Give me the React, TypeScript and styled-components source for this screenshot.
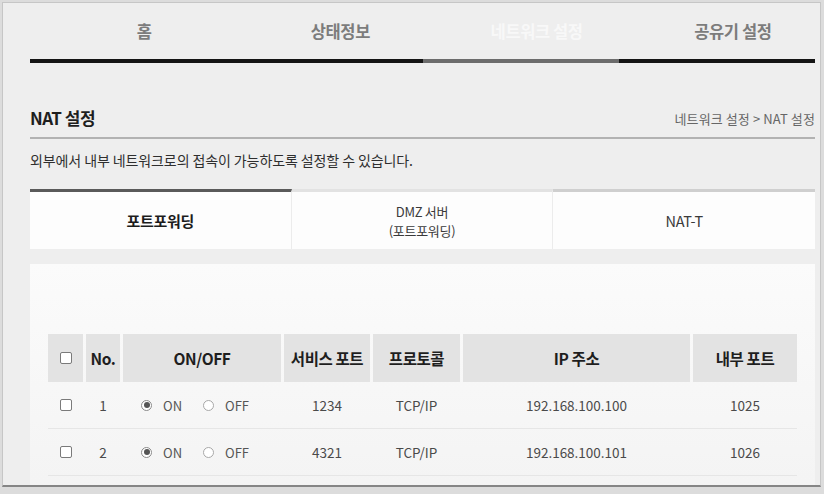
import React from "react";
import styled, { createGlobalStyle } from "styled-components";

const Global = createGlobalStyle`
  html, body { margin: 0; padding: 0; }
  body {
    background: #dcdcdc;
    font-family: "Noto Sans CJK KR", "Noto Sans", sans-serif;
    width: 824px;
    height: 494px;
    overflow: hidden;
  }
`;

const Frame = styled.div`
  box-sizing: border-box;
  margin: 2px 3px 0 2px;
  height: 485px;
  border: 1px solid #c6c6c6;
  border-bottom: 2px solid #858585;
  background: #eeeeee;
  padding: 0 5px 0 27px;
  overflow: hidden;
`;

const Nav = styled.nav`
  display: grid;
  grid-template-columns: repeat(4, 1fr);
`;

const NavItem = styled.div<{ $active?: boolean }>`
  height: 56px;
  display: flex;
  align-items: center;
  justify-content: center;
  padding-left: 32px;
  font-size: 16.5px;
  font-weight: 700;
  letter-spacing: -0.4px;
  color: ${(p) => (p.$active ? "#f8f8f8" : "#7c7c7c")};
  border-bottom: 4px solid ${(p) => (p.$active ? "#6c6c6c" : "#141414")};
`;

const TitleRow = styled.div`
  margin-top: 45px;
  display: flex;
  justify-content: space-between;
  align-items: center;
  padding-bottom: 9px;
  border-bottom: 2px solid #b2b2b2;
`;

const Title = styled.h1`
  margin: 0;
  font-size: 17px;
  line-height: 20px;
  font-weight: 700;
  color: #1e1e1e;
  letter-spacing: -0.5px;
`;

const Crumb = styled.span`
  font-size: 13px;
  color: #666;
  letter-spacing: 0.1px;
`;

const Desc = styled.p`
  margin: 12px 0 0;
  font-size: 14px;
  line-height: 18px;
  color: #2e2e2e;
  letter-spacing: -0.1px;
`;

const Tabs = styled.div`
  margin-top: 20px;
  display: grid;
  grid-template-columns: repeat(3, 1fr);
`;

const Tab = styled.div<{ $active?: boolean; $line: string }>`
  height: 57px;
  background: #fdfdfd;
  border-top: 3px solid ${(p) => p.$line};
  border-right: 1px solid #ececec;
  display: flex;
  flex-direction: column;
  align-items: center;
  justify-content: center;
  font-size: ${(p) => (p.$active ? "15px" : "13px")};
  line-height: 19px;
  font-weight: ${(p) => (p.$active ? 700 : 400)};
  color: ${(p) => (p.$active ? "#1c1c1c" : "#3a3a3a")};
  letter-spacing: -0.3px;
  &:last-child { border-right: none; font-size: 14.5px; }
`;

const Panel = styled.section`
  margin-top: 15px;
  height: 240px;
  background: linear-gradient(#fbfbfb, #f1f1f1);
  padding: 70px 18px 0;
`;

const Row = styled.div<{ $head?: boolean }>`
  display: grid;
  grid-template-columns: 35px 34px 158px 86px 87px 227px 104px;
  column-gap: 3px;
  height: ${(p) => (p.$head ? "48px" : "46px")};
  border-bottom: ${(p) => (p.$head ? "none" : "1px solid #e6e6e6")};
`;

const Cell = styled.div<{ $head?: boolean; $left?: boolean }>`
  display: flex;
  align-items: center;
  justify-content: ${(p) => (p.$left ? "flex-start" : "center")};
  padding-left: ${(p) => (p.$left ? "18px" : "0")};
  gap: 11px;
  background: ${(p) => (p.$head ? "#e3e3e3" : "transparent")};
  font-size: ${(p) => (p.$head ? "15.5px" : "13.5px")};
  font-weight: ${(p) => (p.$head ? 700 : 400)};
  color: ${(p) => (p.$head ? "#1e1e1e" : "#4a4a4a")};
  letter-spacing: ${(p) => (p.$head ? "-0.4px" : "0")};
  white-space: nowrap;
`;

const Check = styled.span`
  box-sizing: border-box;
  width: 12px;
  height: 12px;
  border: 1.5px solid #7a7a7a;
  border-radius: 2px;
  background: #fff;
`;

const Radio = styled.span<{ $on?: boolean }>`
  box-sizing: border-box;
  width: 11px;
  height: 11px;
  border-radius: 50%;
  border: 1px solid ${(p) => (p.$on ? "#8a8a8a" : "#a8a8a8")};
  background: #fff;
  display: inline-flex;
  align-items: center;
  justify-content: center;
  &::after {
    content: "";
    width: 6px;
    height: 6px;
    border-radius: 50%;
    background: ${(p) => (p.$on ? "#555" : "transparent")};
  }
`;

const RadioLabel = styled.span`
  font-size: 13px;
  color: #555;
  margin-right: 10px;
`;

const rows = [
  { no: 1, svc: "1234", proto: "TCP/IP", ip: "192.168.100.100", inner: "1025" },
  { no: 2, svc: "4321", proto: "TCP/IP", ip: "192.168.100.101", inner: "1026" },
];

export default function App() {
  return (
    <>
      <Global />
      <Frame>
        <Nav>
          <NavItem>홈</NavItem>
          <NavItem>상태정보</NavItem>
          <NavItem $active>네트워크 설정</NavItem>
          <NavItem>공유기 설정</NavItem>
        </Nav>
        <TitleRow>
          <Title>NAT 설정</Title>
          <Crumb>네트워크 설정 &gt; NAT 설정</Crumb>
        </TitleRow>
        <Desc>외부에서 내부 네트워크로의 접속이 가능하도록 설정할 수 있습니다.</Desc>
        <Tabs>
          <Tab $active $line="#5a5a5a">포트포워딩</Tab>
          <Tab $line="#e2e2e2">
            <span>DMZ 서버</span>
            <span>(포트포워딩)</span>
          </Tab>
          <Tab $line="#cfcfcf">NAT-T</Tab>
        </Tabs>
        <Panel>
          <Row $head>
            <Cell $head><Check /></Cell>
            <Cell $head>No.</Cell>
            <Cell $head>ON/OFF</Cell>
            <Cell $head>서비스 포트</Cell>
            <Cell $head>프로토콜</Cell>
            <Cell $head>IP 주소</Cell>
            <Cell $head>내부 포트</Cell>
          </Row>
          {rows.map((r) => (
            <Row key={r.no}>
              <Cell><Check /></Cell>
              <Cell>{r.no}</Cell>
              <Cell $left>
                <Radio $on />
                <RadioLabel>ON</RadioLabel>
                <Radio />
                <RadioLabel>OFF</RadioLabel>
              </Cell>
              <Cell>{r.svc}</Cell>
              <Cell>{r.proto}</Cell>
              <Cell>{r.ip}</Cell>
              <Cell>{r.inner}</Cell>
            </Row>
          ))}
        </Panel>
      </Frame>
    </>
  );
}
